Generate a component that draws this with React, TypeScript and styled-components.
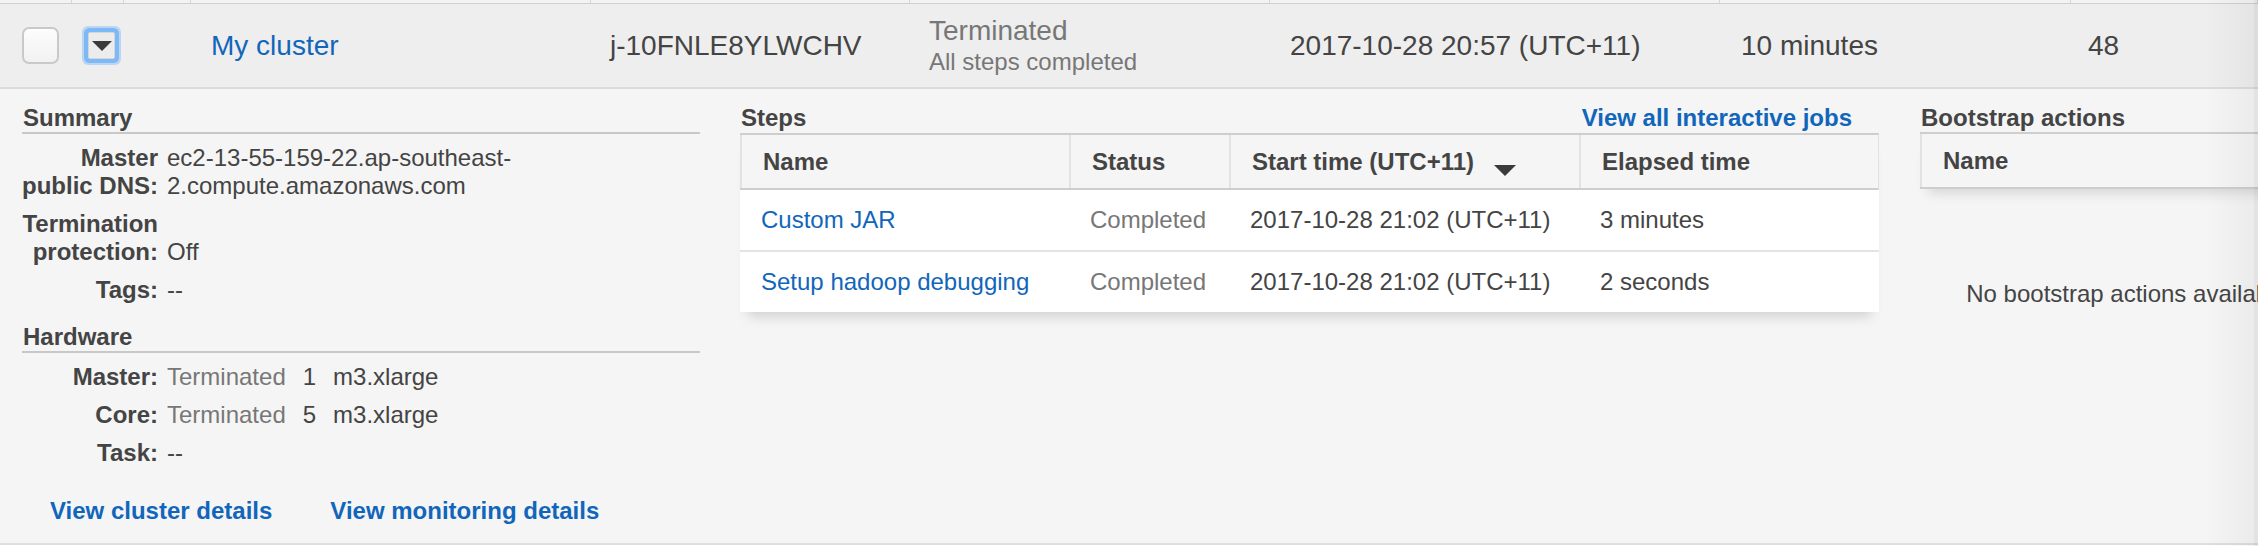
import styled, { createGlobalStyle } from 'styled-components';

const BLUE = '#1166bb';
const TEXT = '#444';
const MUTED = '#777';

// widths of the cluster list columns, shared by the header strip and the row
const LIST_COLS = '72px 52px 67px 400px 319px 360px 450px 351px 1fr';
const STEP_COLS = '329px 160px 350px 300px';

const GlobalStyle = createGlobalStyle`
  html, body {
    margin: 0;
    padding: 0;
    background: #fff;
  }
  body {
    font-family: "Liberation Sans", Arial, sans-serif;
    color: ${TEXT};
    overflow: hidden;
  }
  * {
    box-sizing: border-box;
  }
`;

const Page = styled.div`
  position: relative;
  width: 2258px;
  height: 546px;
  overflow: hidden;
`;

const HeaderStrip = styled.div`
  display: grid;
  grid-template-columns: ${LIST_COLS};
  height: 4px;
  background: #f3f3f3;
  border-bottom: 1px solid #cfcfcf;
`;

const StripCell = styled.div`
  border-right: 1px solid #d6d6d6;
`;

const ClusterRow = styled.div`
  display: grid;
  grid-template-columns: ${LIST_COLS};
  align-items: center;
  height: 85px;
  background: #eeeeee;
  border-bottom: 2px solid #dcdcdc;
`;

const Cell = styled.div<{ $pad?: number }>`
  padding-left: ${(p) => p.$pad ?? 19}px;
  font-size: 28px;
  line-height: 32px;
  color: ${TEXT};
  white-space: nowrap;
`;

const Checkbox = styled.span`
  display: block;
  width: 37px;
  height: 37px;
  border: 2px solid #c9c9c9;
  border-radius: 7px;
  background: linear-gradient(#fdfdfd, #f1f1f1);
`;

const Expander = styled.button`
  display: flex;
  align-items: center;
  justify-content: center;
  width: 27px;
  height: 27px;
  padding: 0;
  border: 1px solid #d6d6d6;
  background: #ececec;
  box-shadow: 0 0 0 4px #7db8f7, 0 0 0 6px rgba(125, 184, 247, 0.45);
  border-radius: 2px;
`;

const DownTriangle = styled.span<{ $w: number; $h: number; $gap?: number; $drop?: number }>`
  display: inline-block;
  width: 0;
  height: 0;
  border-left: ${(p) => p.$w / 2}px solid transparent;
  border-right: ${(p) => p.$w / 2}px solid transparent;
  border-top: ${(p) => p.$h}px solid #3a3a3a;
  margin-left: ${(p) => p.$gap ?? 0}px;
  margin-top: ${(p) => p.$drop ?? 0}px;
`;

const BlueLink = styled.a<{ $bold?: boolean }>`
  color: ${BLUE};
  text-decoration: none;
  font-weight: ${(p) => (p.$bold ? 'bold' : 'normal')};
  cursor: pointer;
`;

const StatusStack = styled.div`
  display: flex;
  flex-direction: column;
  color: ${MUTED};
`;

const StatusSub = styled.span`
  font-size: 24px;
  line-height: 30px;
`;

const Details = styled.div`
  display: flex;
  align-items: flex-start;
  height: 456px;
  padding: 15px 0 0 22px;
  background: #f5f5f5;
  border-bottom: 2px solid #dedede;
`;

const Column = styled.div<{ $width: number; $gap?: number }>`
  flex: none;
  width: ${(p) => p.$width}px;
  margin-left: ${(p) => p.$gap ?? 0}px;
`;

const SectionTitle = styled.div<{ $ruled?: boolean; $top?: number }>`
  display: flex;
  justify-content: space-between;
  height: ${(p) => (p.$ruled ? 30 : 28)}px;
  margin-top: ${(p) => p.$top ?? 0}px;
  padding-left: 1px;
  font-size: 24px;
  line-height: 28px;
  font-weight: bold;
  color: ${TEXT};
  border-bottom: ${(p) => (p.$ruled ? '2px solid #c8c8c8' : 'none')};
`;

const TitleAction = styled.span`
  padding-right: 27px;
`;

const FieldList = styled.div`
  display: flex;
  flex-direction: column;
  gap: 10px;
  margin-top: 10px;
`;

const Field = styled.div`
  display: flex;
  align-items: flex-end;
  gap: 9px;
  font-size: 24px;
  line-height: 28px;
`;

const FieldLabel = styled.div`
  flex: none;
  width: 136px;
  text-align: right;
  font-weight: bold;
  color: ${TEXT};
`;

const FieldValue = styled.div`
  max-width: 370px;
  color: ${TEXT};
`;

const HardwareValue = styled.div`
  display: flex;
  gap: 17px;
  color: ${TEXT};
`;

const Dim = styled.span`
  color: ${MUTED};
`;

const LinkRow = styled.div`
  display: flex;
  gap: 58px;
  margin-top: 30px;
  padding-left: 28px;
  font-size: 24px;
  line-height: 28px;
`;

const Table = styled.div<{ $shadow?: boolean }>`
  margin-top: 1px;
  background: #fff;
  box-shadow: ${(p) => (p.$shadow ? '0 12px 12px -8px rgba(0, 0, 0, 0.16)' : 'none')};
`;

const HeadRow = styled.div<{ $cols: string; $shadow?: boolean }>`
  display: grid;
  grid-template-columns: ${(p) => p.$cols};
  height: 57px;
  background: #f5f5f5;
  border-top: 2px solid #cecece;
  border-bottom: 2px solid #cecece;
  border-right: 1px solid #e2e2e2;
  box-shadow: ${(p) => (p.$shadow ? '0 12px 12px -8px rgba(0, 0, 0, 0.13)' : 'none')};
`;

const HeadCell = styled.div`
  display: flex;
  align-items: center;
  padding-left: 21px;
  border-left: 2px solid #e2e2e2;
  font-size: 24px;
  font-weight: bold;
  color: ${TEXT};
`;

const BodyRow = styled.div`
  display: grid;
  grid-template-columns: ${STEP_COLS};
  align-items: center;
  height: 60px;

  & + & {
    height: 62px;
    border-top: 2px solid #e4e4e4;
  }
`;

const BodyCell = styled.div<{ $muted?: boolean }>`
  padding-left: 21px;
  font-size: 24px;
  color: ${(p) => (p.$muted ? MUTED : TEXT)};
  white-space: nowrap;
`;

const EmptyNote = styled.div`
  display: flex;
  align-items: center;
  justify-content: center;
  height: 210px;
  font-size: 24px;
  color: ${TEXT};
  white-space: nowrap;
`;

const EdgeShade = styled.div`
  position: absolute;
  top: 0;
  right: 0;
  width: 54px;
  height: 100%;
  pointer-events: none;
  background: linear-gradient(to right, rgba(0, 0, 0, 0), rgba(0, 0, 0, 0.045));

  &::after {
    content: '';
    position: absolute;
    top: 0;
    right: 0;
    width: 4px;
    height: 100%;
    background: rgba(0, 0, 0, 0.03);
  }
`;

const steps = [
  { name: 'Custom JAR', status: 'Completed', start: '2017-10-28 21:02 (UTC+11)', elapsed: '3 minutes' },
  { name: 'Setup hadoop debugging', status: 'Completed', start: '2017-10-28 21:02 (UTC+11)', elapsed: '2 seconds' },
];

const hardware = [
  { label: 'Master:', count: '1', type: 'm3.xlarge' },
  { label: 'Core:', count: '5', type: 'm3.xlarge' },
];

export default function App() {
  return (
    <Page>
      <GlobalStyle />
      <HeaderStrip>
        {Array.from({ length: 9 }).map((_, i) => (
          <StripCell key={i} />
        ))}
      </HeaderStrip>

      <ClusterRow>
        <Cell $pad={22}>
          <Checkbox />
        </Cell>
        <Cell $pad={16}>
          <Expander aria-label="Collapse">
            <DownTriangle $w={20} $h={10} />
          </Expander>
        </Cell>
        <Cell />
        <Cell $pad={20}>
          <BlueLink>My cluster</BlueLink>
        </Cell>
        <Cell>j-10FNLE8YLWCHV</Cell>
        <Cell>
          <StatusStack>
            <span>Terminated</span>
            <StatusSub>All steps completed</StatusSub>
          </StatusStack>
        </Cell>
        <Cell $pad={20}>2017-10-28 20:57 (UTC+11)</Cell>
        <Cell $pad={21}>10 minutes</Cell>
        <Cell $pad={17}>48</Cell>
      </ClusterRow>

      <Details>
        <Column $width={678}>
          <SectionTitle $ruled>Summary</SectionTitle>
          <FieldList>
            <Field>
              <FieldLabel>Master public DNS:</FieldLabel>
              <FieldValue>
                ec2-13-55-159-22.ap-southeast-<wbr />2.compute.amazonaws.com
              </FieldValue>
            </Field>
            <Field>
              <FieldLabel>Termination protection:</FieldLabel>
              <FieldValue>Off</FieldValue>
            </Field>
            <Field>
              <FieldLabel>Tags:</FieldLabel>
              <FieldValue>--</FieldValue>
            </Field>
          </FieldList>

          <SectionTitle $ruled $top={19}>Hardware</SectionTitle>
          <FieldList>
            {hardware.map((h) => (
              <Field key={h.label}>
                <FieldLabel>{h.label}</FieldLabel>
                <HardwareValue>
                  <Dim>Terminated</Dim>
                  <span>{h.count}</span>
                  <span>{h.type}</span>
                </HardwareValue>
              </Field>
            ))}
            <Field>
              <FieldLabel>Task:</FieldLabel>
              <FieldValue>--</FieldValue>
            </Field>
          </FieldList>

          <LinkRow>
            <BlueLink $bold>View cluster details</BlueLink>
            <BlueLink $bold>View monitoring details</BlueLink>
          </LinkRow>
        </Column>

        <Column $width={1139} $gap={40}>
          <SectionTitle>
            <span>Steps</span>
            <TitleAction>
              <BlueLink $bold>View all interactive jobs</BlueLink>
            </TitleAction>
          </SectionTitle>
          <Table $shadow>
            <HeadRow $cols={STEP_COLS}>
              <HeadCell>Name</HeadCell>
              <HeadCell>Status</HeadCell>
              <HeadCell>
                Start time (UTC+11)
                <DownTriangle $w={22} $h={11} $gap={20} $drop={18} />
              </HeadCell>
              <HeadCell>Elapsed time</HeadCell>
            </HeadRow>
            {steps.map((s) => (
              <BodyRow key={s.name}>
                <BodyCell>
                  <BlueLink>{s.name}</BlueLink>
                </BodyCell>
                <BodyCell $muted>{s.status}</BodyCell>
                <BodyCell>{s.start}</BodyCell>
                <BodyCell>{s.elapsed}</BodyCell>
              </BodyRow>
            ))}
          </Table>
        </Column>

        <Column $width={414} $gap={41}>
          <SectionTitle>Bootstrap actions</SectionTitle>
          <HeadRow $cols="1fr" $shadow>
            <HeadCell>Name</HeadCell>
          </HeadRow>
          <EmptyNote>No bootstrap actions available</EmptyNote>
        </Column>
      </Details>

      <EdgeShade />
    </Page>
  );
}
